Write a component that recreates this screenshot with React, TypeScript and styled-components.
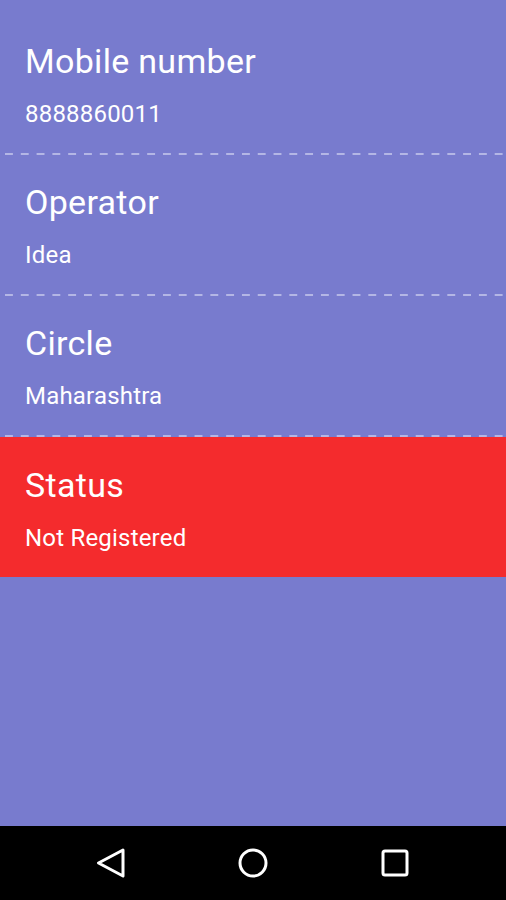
import React from "react";
import styled, { createGlobalStyle } from "styled-components";

const Global = createGlobalStyle`
  html, body { margin: 0; padding: 0; }
  body { font-family: Roboto, "Noto Sans", sans-serif; background: #787BCE; }
`;

const Screen = styled.div`
  width: 506px;
  height: 900px;
  display: flex;
  flex-direction: column;
  background: #787BCE;
  overflow: hidden;
`;

const Content = styled.div`
  flex: 1;
  display: flex;
  flex-direction: column;
  padding-top: 14px;
`;

const Section = styled.div<{ $alert?: boolean }>`
  height: ${(p) => (p.$alert ? "140px" : "139px")};
  box-sizing: border-box;
  padding: ${(p) => (p.$alert ? "29px" : "28px")} 25px 0;
  background: ${(p) => (p.$alert ? "#F42B2D" : "transparent")};
  display: flex;
  flex-direction: column;
`;

const Title = styled.div`
  font-size: 34px;
  line-height: 38px;
  letter-spacing: 0.3px;
  color: #ffffff;
`;

const Value = styled.div`
  margin-top: 20px;
  font-size: 24px;
  line-height: 28px;
  letter-spacing: 0.2px;
  color: #ffffff;
`;

const Divider = styled.div`
  height: 2px;
  background-image: linear-gradient(to right, rgba(220, 222, 245, 0.6) 0 8px, transparent 8px);
  background-size: 15.8px 2px;
  background-position: 5px 0;
  background-repeat: repeat-x;
`;

const NavBar = styled.div`
  height: 74px;
  background: #000;
  display: flex;
  align-items: center;
  justify-content: space-around;
  padding: 0 40px;
`;

const NavButton = styled.div`
  width: 60px;
  height: 60px;
  display: flex;
  align-items: center;
  justify-content: center;
`;

const rows = [
  { title: "Mobile number", value: "8888860011" },
  { title: "Operator", value: "Idea" },
  { title: "Circle", value: "Maharashtra" },
];

export default function App() {
  return (
    <>
      <Global />
      <Screen>
        <Content>
          {rows.map((r) => (
            <React.Fragment key={r.title}>
              <Section>
                <Title>{r.title}</Title>
                <Value>{r.value}</Value>
              </Section>
              <Divider />
            </React.Fragment>
          ))}
          <Section $alert>
            <Title>Status</Title>
            <Value>Not Registered</Value>
          </Section>
        </Content>
        <NavBar>
          <NavButton>
            <svg width="32" height="32" viewBox="0 0 32 32">
              <path d="M28 3 L3.5 16 L28 29 Z" fill="none" stroke="#fff" strokeWidth="3" strokeLinejoin="round" />
            </svg>
          </NavButton>
          <NavButton>
            <svg width="32" height="32" viewBox="0 0 32 32">
              <circle cx="16" cy="16" r="13" fill="none" stroke="#fff" strokeWidth="3" />
            </svg>
          </NavButton>
          <NavButton>
            <svg width="30" height="30" viewBox="0 0 30 30">
              <rect x="3" y="3" width="24" height="24" rx="2" fill="none" stroke="#fff" strokeWidth="3" />
            </svg>
          </NavButton>
        </NavBar>
      </Screen>
    </>
  );
}
